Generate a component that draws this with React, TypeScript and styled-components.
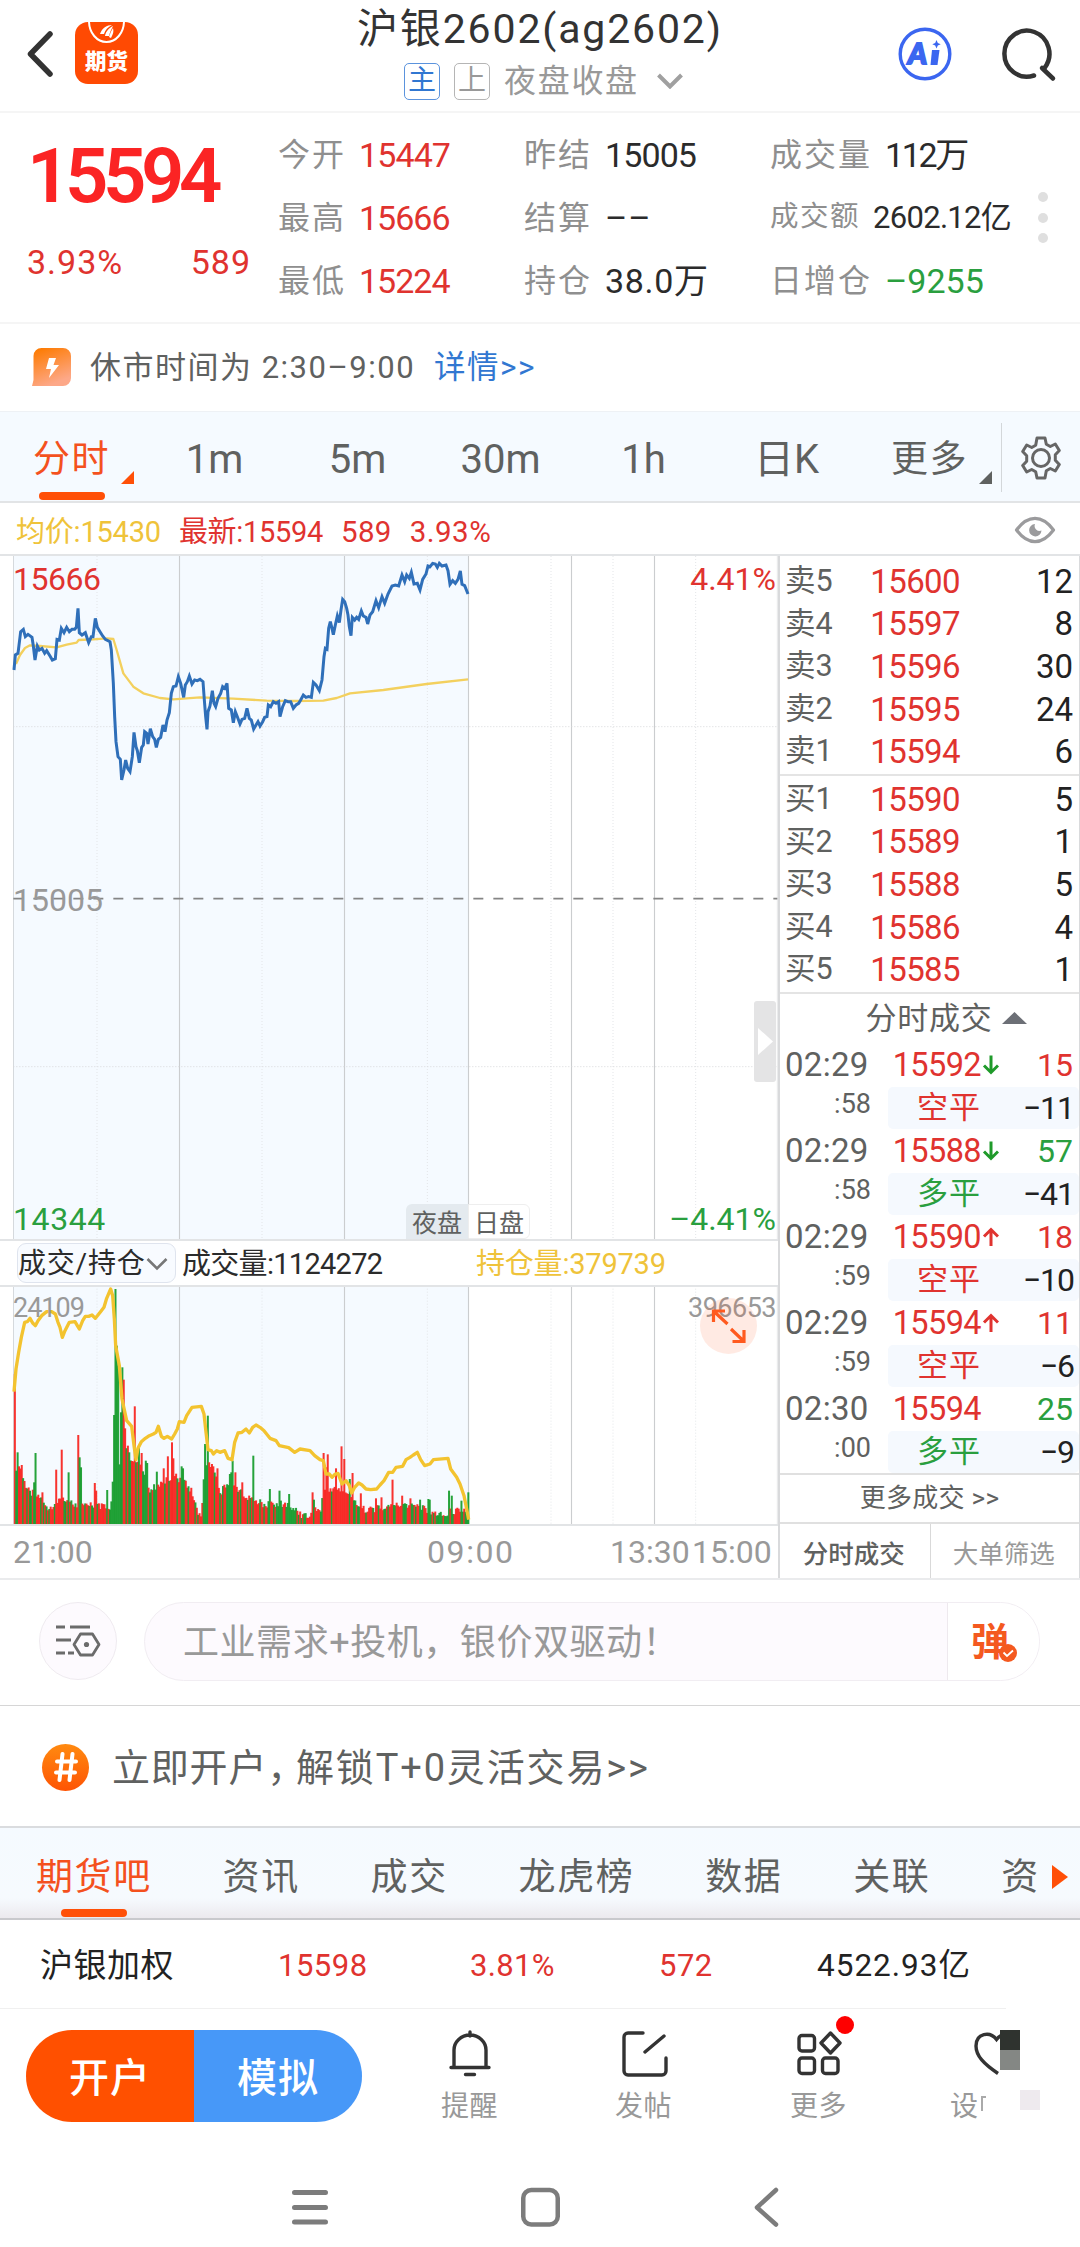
import React from "react";
import styled, { createGlobalStyle } from "styled-components";

const RED = "#e0332f";
const GREEN = "#2a9f3f";
const ORANGE = "#ff4f07";
const YELLOW = "#efc33a";
const INK = "#2b2b2b";
const MID = "#5f6160";
const MUTED = "#8f8f8f";
const LINE = "#e2e4e6";

const Global = createGlobalStyle`
  * { box-sizing: border-box; }
  body {
    margin: 0;
    background: #fff;
    font-family: Roboto, "Noto Sans CJK SC", sans-serif;
    line-height: 1;
    color: ${INK};
  }
`;

type TextProps = { $size?: number; $color?: string; $track?: number; $weight?: number };

const Text = styled.span<TextProps>`
  font-size: ${(p) => p.$size ?? 32}px;
  color: ${(p) => p.$color ?? "inherit"};
  letter-spacing: ${(p) => p.$track ?? 0}px;
  font-weight: ${(p) => p.$weight ?? 400};
  white-space: pre;
  line-height: 1;
`;

const Screen = styled.div`
  width: 1080px;
  height: 2247px;
  display: flex;
  flex-direction: column;
  overflow: hidden;
`;

/* ---------- header ---------- */
const Header = styled.header`
  height: 113px;
  flex: none;
  display: grid;
  grid-template-columns: 75px 64px 1fr 59px 126px;
  border-bottom: 2px solid #f5f5f5;
`;
const HeaderCell = styled.div<{ $top: number; $left?: number }>`
  padding-top: ${(p) => p.$top}px;
  padding-left: ${(p) => p.$left ?? 0}px;
  svg { display: block; }
`;
const AppLogo = styled.div`
  margin-top: 22px;
  width: 63px;
  height: 62px;
  border-radius: 13px;
  background: #ff4a03;
  display: flex;
  flex-direction: column;
  align-items: center;
  overflow: hidden;
  svg { display: block; flex: none; }
`;
const TitleBlock = styled.div`
  display: flex;
  flex-direction: column;
  padding-left: 218px;
`;
const TitleLine = styled.div`
  height: 56px;
  padding-top: 2px;
  display: flex;
  align-items: center;
`;
const SubLine = styled.div`
  height: 50px;
  margin-left: 47px;
  display: flex;
  align-items: center;
  svg { margin-left: 18px; }
`;
const Tag = styled.span<{ $color: string }>`
  width: 36px;
  height: 37px;
  margin-right: 14px;
  border: 1.5px solid ${(p) => p.$color};
  border-radius: 5px;
  display: flex;
  align-items: center;
  justify-content: center;
`;

/* ---------- quote ---------- */
const Quote = styled.section`
  height: 211px;
  flex: none;
  display: grid;
  grid-template-columns: 278px 246px 246px 261px 1fr;
  border-bottom: 2px solid #f5f5f5;
`;
const PriceBlock = styled.div`
  padding: 25px 0 0 27px;
`;
const BigPrice = styled.div`
  height: 76px;
  display: flex;
  align-items: center;
`;
const ChangeLine = styled.div`
  height: 40px;
  margin-top: 28px;
  width: 224px;
  display: flex;
  align-items: center;
  justify-content: space-between;
`;
const QuoteColumn = styled.div`
  padding-top: 10px;
`;
const QuoteItem = styled.div<{ $label: number }>`
  height: 63px;
  display: grid;
  grid-template-columns: ${(p) => p.$label}px auto;
  align-items: center;
  justify-content: start;
`;
const Dots = styled.div`
  display: flex;
  flex-direction: column;
  gap: 10.5px;
  padding: 79px 0 0 7px;
`;
const Dot = styled.i`
  width: 10px;
  height: 10px;
  border-radius: 50%;
  background: #dfdfdf;
`;

/* ---------- notice ---------- */
const Notice = styled.section`
  height: 87px;
  flex: none;
  display: flex;
  align-items: center;
  padding-left: 32px;
`;
const NoticeText = styled.div`
  margin-left: 19px;
  display: flex;
  align-items: center;
`;

/* ---------- period tabs ---------- */
const Periods = styled.nav`
  height: 92px;
  flex: none;
  background: #f5faff;
  border-top: 1px solid #eef1f5;
  border-bottom: 2px solid ${LINE};
  display: flex;
`;
const Period = styled.div`
  position: relative;
  width: 143px;
  display: flex;
  align-items: center;
  justify-content: center;
  padding-top: 6px;
`;
const Corner = styled.i<{ $color: string }>`
  position: absolute;
  right: 9px;
  bottom: 17px;
  border-left: 13px solid transparent;
  border-bottom: 13px solid ${(p) => p.$color};
`;
const Underline = styled.i<{ $bottom: number }>`
  position: absolute;
  left: 50%;
  bottom: ${(p) => p.$bottom}px;
  width: 66px;
  height: 8px;
  margin-left: -33px;
  border-radius: 4px;
  background: ${ORANGE};
`;
const GearCell = styled.div`
  width: 79px;
  margin: 11px 0 9px;
  border-left: 1px solid #d3d7da;
  display: flex;
  align-items: center;
  justify-content: center;
`;

/* ---------- average line ---------- */
const InfoRow = styled.section`
  height: 53px;
  flex: none;
  display: flex;
  align-items: center;
  padding: 8px 24px 0 16px;
  gap: 18px;
  border-bottom: 2px solid ${LINE};
  svg { margin: -6px 0 0 auto; }
`;

/* ---------- chart + book ---------- */
const Main = styled.main`
  height: 1024px;
  flex: none;
  display: grid;
  grid-template-columns: 778px 302px;
  border-bottom: 2px solid #eaebed;
`;
const ChartSide = styled.div`
  display: flex;
  flex-direction: column;
`;
const Plot = styled.div<{ $h: number }>`
  position: relative;
  height: ${(p) => p.$h}px;
  svg { display: block; }
`;
const PlotLabel = styled.div<{ $top: number; $left?: number; $right?: number }>`
  position: absolute;
  top: ${(p) => p.$top}px;
  ${(p) => (p.$left !== undefined ? `left: ${p.$left}px;` : "")}
  ${(p) => (p.$right !== undefined ? `right: ${p.$right}px;` : "")}
  display: flex;
`;
const Sessions = styled.div`
  position: absolute;
  left: 406px;
  bottom: 0;
  display: flex;
`;
const Session = styled.div<{ $active?: boolean }>`
  width: 62px;
  height: 35px;
  padding-top: 3px;
  display: flex;
  align-items: center;
  justify-content: center;
  background: ${(p) => (p.$active ? "#e4eaef" : "#fff")};
  border: ${(p) => (p.$active ? "none" : "1px solid #eee")};
  border-radius: ${(p) => (p.$active ? "6px 0 0 0" : "0 6px 6px 0")};
`;
const Handle = styled.div`
  position: absolute;
  right: 2px;
  top: 445px;
  width: 22px;
  height: 81px;
  border-radius: 3px;
  background: #e4e4e5;
  display: flex;
  align-items: center;
  justify-content: center;
`;
const Legend = styled.div`
  height: 48px;
  border-top: 2px solid ${LINE};
  border-bottom: 2px solid ${LINE};
  display: grid;
  grid-template-columns: 159px 300px 1fr;
  padding-left: 17px;
  align-items: center;
`;
const Selector = styled.div`
  height: 40px;
  padding-top: 2px;
  border: 1px solid #dfe4ee;
  border-radius: 9px;
  background: #f8fbff;
  display: flex;
  align-items: center;
`;
const LegendText = styled.div<{ $pad: number }>`
  padding: 2px 0 0 ${(p) => p.$pad}px;
  display: flex;
`;
const Axis = styled.div`
  height: 54px;
  border-top: 2px solid ${LINE};
  display: grid;
  grid-template-columns: 414px 183px 82px auto;
  padding-left: 13px;
  align-items: center;
`;
const ExpandButton = styled.div`
  position: absolute;
  right: 21px;
  top: 11px;
  width: 57px;
  height: 56px;
  border-radius: 50%;
  background: rgba(255, 90, 40, 0.13);
  display: flex;
  align-items: center;
  justify-content: center;
`;

const Book = styled.aside`
  border-left: 2px solid #d9dadc;
  border-right: 1px solid #d9dadc;
  display: flex;
  flex-direction: column;
`;
const Levels = styled.div<{ $pad: string }>`
  padding: ${(p) => p.$pad};
  border-bottom: 2px solid #e4e4e4;
`;
const Level = styled.div`
  height: 42.6px;
  display: grid;
  grid-template-columns: 54px 121px 1fr;
  align-items: center;
  padding: 0 6px 0 5px;
  & > :nth-child(n + 2) { text-align: right; }
`;
const TradesTitle = styled.div`
  height: 49px;
  display: flex;
  align-items: center;
  justify-content: center;
  padding-left: 33px;
  gap: 9px;
`;
const Trade = styled.div`
  height: 86px;
  display: grid;
  grid-template-columns: 108px 1fr;
  grid-template-rows: 44px 42px;
`;
const TradeTime = styled.div`
  padding-left: 5px;
  display: flex;
  align-items: center;
`;
const TradeSecond = styled.div`
  display: flex;
  align-items: center;
  justify-content: flex-end;
  padding: 0 17px 6px 0;
`;
const TradePrice = styled.div`
  display: grid;
  grid-template-columns: 93px 18px 1fr;
  align-items: center;
  padding-right: 6px;
  & > :first-child, & > :last-child { text-align: right; }
`;
const TradeKind = styled.div`
  background: #f5f9fe;
  border-radius: 5px;
  display: flex;
  align-items: center;
  justify-content: space-between;
  padding: 0 5px 0 29px;
`;
const MoreTrades = styled.div`
  flex: 1;
  border-top: 2px solid #e0e0e0;
  display: flex;
  align-items: center;
  justify-content: center;
`;
const BookTabs = styled.div`
  height: 56px;
  border-top: 2px solid #e0e0e0;
  display: grid;
  grid-template-columns: 1fr 1fr;
`;
const BookTab = styled.div`
  display: flex;
  align-items: center;
  justify-content: center;
  padding: 7px 2px 0 0;
  & + & { border-left: 1px solid #d9d9d9; }
`;

/* ---------- comment bar ---------- */
const CommentBar = styled.section`
  height: 126px;
  flex: none;
  border-bottom: 1px solid #d6d6d6;
  padding: 22px 40px 0 39px;
  display: flex;
  gap: 27px;
`;
const RoundButton = styled.div`
  width: 78px;
  height: 78px;
  border-radius: 50%;
  border: 1px solid #efebf0;
  background: #fdfafe;
  display: flex;
  align-items: center;
  justify-content: center;
`;
const CommentField = styled.div`
  flex: 1;
  height: 79px;
  border: 1px solid #f1edf2;
  border-radius: 40px;
  background: #fdfafe;
  display: flex;
  overflow: hidden;
`;
const Placeholder = styled.div`
  flex: 1;
  display: flex;
  align-items: center;
  padding: 2px 0 0 38px;
`;
const BarrageToggle = styled.div`
  position: relative;
  width: 92px;
  background: #fff;
  border-left: 1px solid #eee9ee;
  display: flex;
  align-items: center;
  padding-left: 23px;
  svg { position: absolute; left: 51px; top: 41px; }
`;

/* ---------- promo ---------- */
const Promo = styled.section`
  height: 122px;
  flex: none;
  border-bottom: 2px solid #dadcdf;
  display: flex;
  align-items: center;
  padding: 2px 0 0 42px;
`;
const PromoText = styled.div`
  padding: 2px 0 0 23px;
  display: flex;
  & > :first-child { margin-right: -10px; }
`;
const HashBadge = styled.div`
  width: 47px;
  height: 47px;
  border-radius: 50%;
  background: linear-gradient(#ff8a10, #fe5404);
  display: flex;
  align-items: center;
  justify-content: center;
`;

/* ---------- section tabs ---------- */
const Sections = styled.nav`
  position: relative;
  height: 92px;
  flex: none;
  display: flex;
  gap: 70.8px;
  padding: 8px 0 0 36px;
  background: linear-gradient(#f5faff 0, #f6fafe 78%, #ece9ee 100%);
  border-bottom: 2px solid #c9c9cd;
`;
const SectionTab = styled.div`
  position: relative;
  display: flex;
  align-items: center;
`;
const NextArrow = styled.i`
  position: absolute;
  left: 1052px;
  top: 37px;
  border-left: 16px solid ${ORANGE};
  border-top: 12px solid transparent;
  border-bottom: 12px solid transparent;
`;

/* ---------- weighted row ---------- */
const WeightedRow = styled.section`
  height: 89px;
  flex: none;
  width: 1006px;
  border-bottom: 1px solid #f0f0f0;
  display: grid;
  grid-template-columns: 238px 192px 189px 158px auto;
  align-items: center;
  padding: 3px 0 0 40px;
`;

/* ---------- actions ---------- */
const Actions = styled.footer`
  height: 135px;
  flex: none;
  display: grid;
  grid-template-columns: 336px 79px 57px 117px 57px 118px 57px 92px 100px;
  padding: 21px 0 0 26px;
  & > *:nth-child(2) { grid-column: 3; }
  & > *:nth-child(3) { grid-column: 5; }
  & > *:nth-child(4) { grid-column: 7; }
  & > *:nth-child(5) { grid-column: 9; }
`;
const Split = styled.div`
  height: 92px;
  display: grid;
  grid-template-columns: 168px 168px;
  border-radius: 46px;
  overflow: hidden;
`;
const SplitHalf = styled.div<{ $bg: string }>`
  background: ${(p) => p.$bg};
  display: flex;
  align-items: center;
  justify-content: center;
  padding-top: 6px;
`;
const Action = styled.div`
  position: relative;
  display: flex;
  flex-direction: column;
  align-items: center;
  svg { display: block; margin-bottom: 15px; flex: none; }
`;
const Badge = styled.i`
  position: absolute;
  left: 46px;
  top: -14px;
  width: 18px;
  height: 18px;
  border-radius: 50%;
  background: #fe0000;
`;
const FadedAction = styled.div`
  position: relative;
  padding-left: 19px;
`;
const HeartIcon = styled.svg`
  display: block;
  margin: 0 0 15px 16px;
`;
const FadedLabel = styled.div`
  margin-left: -8px;
  display: flex;
  gap: 2px;
`;
const Pixel = styled.i<{ $x: number; $y: number; $bg: string }>`
  position: absolute;
  left: ${(p) => p.$x}px;
  top: ${(p) => p.$y}px;
  width: 20px;
  height: 20px;
  background: ${(p) => p.$bg};
`;

const SystemNav = styled.div`
  height: 103px;
  flex: none;
  display: grid;
  grid-template-columns: 36px 39px 24px;
  column-gap: 193px;
  padding: 43px 0 0 292px;
  svg:last-child { margin-left: 1px; }
`;

/* ---------- chart data, in thirds of a pixel ---------- */
const PRICE =
  "42,390 46,345 54,340 62,275 70,268 76,290 84,283 96,292 100,318 105,360 112,318 118,330 126,325 134,340 140,332 150,348 157,360 166,356 171,298 178,300 184,265 192,278 200,262 208,275 216,268 224,268 229,262 234,205 238,278 246,285 256,278 266,308 274,290 279,290 286,235 292,262 300,275 308,288 316,298 330,305 334,330 340,430 344,530 348,605 354,650 361,658 365,720 372,690 377,660 383,685 390,695 397,650 402,577 408,620 412,632 418,668 425,622 430,615 434,575 440,580 444,612 451,566 458,590 464,598 469,622 475,598 482,592 489,555 495,575 501,540 508,518 514,460 520,440 528,438 535,410 542,430 551,472 556,435 562,425 568,408 576,432 584,420 592,422 600,418 609,425 613,480 617,530 621,568 624,515 630,498 637,452 642,490 647,500 654,475 662,460 668,440 674,445 681,430 686,505 694,510 700,548 706,515 712,530 720,552 726,538 734,535 741,505 748,535 754,540 761,567 768,555 774,545 780,558 788,545 794,532 801,530 805,495 812,500 820,485 828,490 836,485 840,530 848,500 856,482 864,485 872,485 880,505 888,495 896,490 902,480 910,465 918,472 926,470 934,472 940,427 948,435 958,452 966,420 972,350 976,325 981,328 986,265 991,245 996,265 1000,284 1006,255 1012,228 1018,248 1023,210 1028,178 1034,185 1040,205 1044,225 1048,260 1053,287 1057,232 1064,240 1070,232 1076,238 1084,213 1090,228 1098,232 1103,252 1110,225 1118,215 1128,182 1136,203 1146,170 1154,190 1164,162 1176,138 1186,135 1196,138 1206,105 1214,125 1220,105 1228,115 1234,97 1242,132 1252,130 1260,150 1268,118 1278,102 1284,78 1290,80 1298,70 1306,72 1312,82 1318,70 1326,78 1338,75 1344,92 1350,133 1358,122 1366,130 1374,118 1381,93 1386,133 1394,137 1404,162";
const AVERAGE =
  "48,372 60,345 75,324 90,316 120,318 170,322 200,314 230,308 236,300 280,298 320,295 340,297 350,330 370,400 400,440 430,460 480,474 520,478 600,472 700,476 800,482 880,483 970,482 1010,474 1050,460 1150,450 1280,432 1404,418";
const INTEREST =
  "42,638 48,570 56,520 64,475 74,430 82,428 90,418 98,432 106,440 114,425 125,410 140,398 155,398 166,405 174,430 180,445 187,475 195,455 208,430 225,428 232,440 238,450 248,425 256,412 266,412 276,408 286,418 294,408 304,395 312,385 320,358 332,330 338,350 343,420 347,500 358,560 366,660 380,725 395,742 402,800 408,842 414,808 424,788 436,778 448,770 460,765 468,760 475,742 484,772 492,778 502,772 515,780 524,765 532,750 538,728 552,730 560,710 576,685 604,682 612,705 618,760 624,812 634,815 640,825 650,815 660,820 674,815 684,838 696,842 704,790 714,762 726,760 738,750 748,762 758,745 768,738 780,745 792,755 810,778 828,785 838,800 866,806 884,820 900,810 930,815 944,830 960,842 970,845 978,885 988,885 996,895 1006,885 1014,883 1026,915 1038,905 1048,920 1055,942 1064,925 1076,912 1086,918 1098,930 1112,932 1130,930 1140,918 1152,905 1166,880 1178,880 1188,865 1208,862 1218,842 1230,835 1240,828 1252,820 1262,842 1274,860 1290,855 1300,842 1344,838 1352,870 1370,895 1380,915 1392,950 1400,990 1406,1022";

const BASE: [number, number][] = [
  [42, 860], [64, 870], [74, 915], [90, 940], [110, 940], [145, 985], [190, 950], [215, 972], [250, 980], [270, 975],
  [330, 985], [338, 930], [376, 800], [395, 840], [430, 870], [450, 930], [480, 910], [520, 885], [550, 905], [575, 935],
  [590, 990], [605, 1005], [612, 860], [640, 870], [660, 940], [690, 900], [740, 955], [800, 975], [850, 970], [880, 985],
  [900, 1003], [930, 1008], [945, 990], [962, 990], [968, 930], [1010, 925], [1040, 935], [1060, 965], [1080, 988],
  [1150, 985], [1180, 975], [1230, 975], [1280, 990], [1340, 1012], [1345, 995], [1400, 990], [1410, 990],
];
const SPIKES: [number, number, "r" | "g"][] = [
  [46, 585, "r"], [52, 820, "g"], [58, 862, "r"], [64, 858, "r"], [100, 910, "g"], [105, 822, "g"], [126, 940, "r"],
  [170, 872, "r"], [183, 812, "r"], [204, 880, "g"], [233, 768, "r"], [238, 835, "g"], [243, 865, "g"], [282, 912, "r"],
  [287, 935, "r"], [319, 933, "g"], [336, 908, "g"], [340, 708, "g"], [345, 330, "g"], [350, 500, "g"], [355, 560, "g"],
  [361, 700, "g"], [365, 565, "g"], [370, 602, "r"], [376, 748, "r"], [382, 800, "r"], [388, 820, "g"], [402, 682, "r"],
  [408, 850, "g"], [418, 800, "g"], [424, 822, "r"], [437, 845, "g"], [442, 852, "g"], [468, 878, "g"], [489, 868, "r"],
  [505, 832, "r"], [514, 790, "r"], [519, 838, "r"], [543, 862, "g"], [549, 868, "g"], [616, 795, "g"], [621, 710, "g"],
  [628, 850, "r"], [634, 855, "r"], [640, 862, "r"], [650, 868, "r"], [688, 885, "g"], [694, 880, "g"], [699, 845, "g"],
  [705, 880, "r"], [725, 910, "r"], [761, 830, "g"], [810, 930, "g"], [839, 935, "g"], [866, 945, "g"], [938, 940, "r"],
  [943, 962, "g"], [972, 822, "r"], [979, 865, "r"], [984, 826, "r"], [1009, 868, "r"], [1026, 802, "r"],
  [1031, 840, "r"], [1047, 900, "g"], [1059, 882, "r"], [1083, 943, "r"], [1128, 958, "r"], [1145, 955, "r"],
  [1178, 902, "r"], [1207, 950, "r"], [1231, 958, "r"], [1261, 962, "g"], [1285, 960, "g"], [1290, 962, "g"],
  [1348, 935, "g"], [1353, 950, "g"], [1385, 965, "g"], [1405, 940, "g"],
];

function baseAt(x: number) {
  for (let i = 1; i < BASE.length; i++) {
    const [x0, y0] = BASE[i - 1];
    const [x1, y1] = BASE[i];
    if (x <= x1) return y0 + ((y1 - y0) * (x - x0)) / (x1 - x0);
  }
  return 990;
}

const BARS = Array.from({ length: 330 }, (_, i) => {
  const x = 44 + i * 4.135;
  const noise = Math.abs(Math.sin(i * 12.9898) * 43758.5453) % 1;
  const spike = SPIKES.find((s) => Math.abs(s[0] - x) <= 2.07);
  const top = spike ? spike[1] : baseAt(x) + noise * 22 - 8;
  const green = spike ? spike[2] === "g" : Math.abs(Math.sin(i * 4.1414) * 9631.77) % 1 > 0.6;
  return { x, top, green };
});

const SOLID = [538.5, 1033.5, 1405.5, 1714.5, 1963.5];
const DOTTED = [291, 786, 1282, 1653, 1839, 2087];

const Gridlines = ({ top, bottom }: { top: number; bottom: number }) => (
  <>
    <rect x="40" y={top} width="1366" height={bottom - top} fill="#f5faff" />
    <line x1="40.5" x2="40.5" y1={top} y2={bottom} stroke="#d5d9dd" strokeWidth="3" />
    {SOLID.map((x) => (
      <line key={x} x1={x} x2={x} y1={top} y2={bottom} stroke="#cbcdcf" strokeWidth="3.4" />
    ))}
    {DOTTED.map((x) => (
      <line key={x} x1={x} x2={x} y1={top} y2={bottom} stroke="#e3e5e8" strokeWidth="3" strokeDasharray="3 6" />
    ))}
    <line x1="2332" x2="2332" y1={top} y2={bottom} stroke="#e6e7e8" strokeWidth="3" />
  </>
);

const PriceChart = () => (
  <svg width="778" height="683" viewBox="0 48 2334 2049">
    <Gridlines top={48} bottom={2097} />
    {[560, 1580].map((y) => (
      <line key={y} x1="40" x2="2332" y1={y} y2={y} stroke="#d6d8da" strokeWidth="3" strokeDasharray="3 6" />
    ))}
    <line x1="40" x2="2332" y1="1076" y2="1076" stroke="#858585" strokeWidth="5" strokeDasharray="30 30" />
    <polyline points={AVERAGE} fill="none" stroke="#f3d05e" strokeWidth="7" strokeLinejoin="round" />
    <polyline points={PRICE} fill="none" stroke="#2f6fb9" strokeWidth="9" strokeLinejoin="miter" />
  </svg>
);

const VolumeChart = () => (
  <svg width="778" height="237" viewBox="0 324 2334 711" preserveAspectRatio="none">
    <Gridlines top={320} bottom={1036} />
    {BARS.map((b) => (
      <rect
        key={b.x}
        x={b.x - 2.4}
        y={b.top}
        width="6"
        height={1036 - b.top}
        fill={b.green ? "#169c2c" : "#f7231f"}
        fillOpacity="0.93"
      />
    ))}
    <polyline points={INTEREST} fill="none" stroke="#f3c32f" strokeWidth="10" strokeLinejoin="round" />
  </svg>
);

/* ---------- content ---------- */
type QuoteEntry = { label: string; value: string; color?: string; small?: boolean; width: number; track?: number };
const QUOTES: QuoteEntry[][] = [
  [
    { label: "今开", value: "15447", color: RED, width: 81, track: -0.9 },
    { label: "最高", value: "15666", color: RED, width: 81, track: -1 },
    { label: "最低", value: "15224", color: RED, width: 81, track: -1 },
  ],
  [
    { label: "昨结", value: "15005", width: 81, track: -0.9 },
    { label: "结算", value: "--", width: 81, track: 1 },
    { label: "持仓", value: "38.0万", width: 81, track: 0.7 },
  ],
  [
    { label: "成交量", value: "112万", width: 115, track: -2.4 },
    { label: "成交额", value: "2602.12亿", small: true, width: 103, track: -0.7 },
    { label: "日增仓", value: "-9255", color: GREEN, width: 115 },
  ],
];

const ASKS = [["卖5", "15600", "12"], ["卖4", "15597", "8"], ["卖3", "15596", "30"], ["卖2", "15595", "24"], ["卖1", "15594", "6"]];
const BIDS = [["买1", "15590", "5"], ["买2", "15589", "1"], ["买3", "15588", "5"], ["买4", "15586", "4"], ["买5", "15585", "1"]];

const TRADES = [
  { time: "02:29", sec: ":58", price: "15592", dir: "down", qty: "15", kind: "空平", delta: "−11", up: true },
  { time: "02:29", sec: ":58", price: "15588", dir: "down", qty: "57", kind: "多平", delta: "−41", up: false },
  { time: "02:29", sec: ":59", price: "15590", dir: "up", qty: "18", kind: "空平", delta: "−10", up: true },
  { time: "02:29", sec: ":59", price: "15594", dir: "up", qty: "11", kind: "空平", delta: "−6", up: true },
  { time: "02:30", sec: ":00", price: "15594", dir: "", qty: "25", kind: "多平", delta: "−9", up: false },
];

const LevelRows = ({ rows }: { rows: string[][] }) => (
  <>
    {rows.map(([label, price, qty]) => (
      <Level key={label}>
        <Text $size={30.500} $color={MID}>{label}</Text>
        <Text $size={33} $color={RED} $track={-0.600}>{price}</Text>
        <Text $size={33} $color="#222">{qty}</Text>
      </Level>
    ))}
  </>
);

const DirArrow = ({ dir }: { dir: string }) => (
  <svg width="18" height="20" viewBox="0 0 18 20" fill="none" strokeWidth="3" stroke={dir === "up" ? RED : "#1f9a2a"}>
    {dir === "down" && <path d="M10 0.500v17M3 10.500l7 7 7-7" />}
    {dir === "up" && <path d="M10 19V2.500M3 9.500l7-7 7 7" />}
  </svg>
);

export default function App() {
  return (
    <Screen>
      <Global />
      <Header>
        <HeaderCell $top={30} $left={26}>
          <svg width="30" height="48" viewBox="0 0 30 48" fill="none" stroke="#333" strokeWidth="5.5" strokeLinecap="round" strokeLinejoin="round">
            <path d="M24 4L4.500 24L24 44" />
          </svg>
        </HeaderCell>
        <AppLogo>
          <svg width="63" height="29" viewBox="0 0 63 29" fill="none">
            <path d="M14 -1c0 12 8 21 17.500 21S49 11 49 -1" stroke="#fff" strokeWidth="2" />
            <path d="M25 12c2-6 7-9 12-9-4 2-7 5-8 9M30 14c1-5 4-8 8-10-2 4-3 6-4 10M34 15c1-3 2-6 4-9 1 4 0 6-2 10" fill="#fff" />
          </svg>
          <Text $size={21.500} $weight={900} $color="#fff">期货</Text>
        </AppLogo>
        <TitleBlock>
          <TitleLine>
            <Text $size={41} $color="#333" $track={1.850}>沪银2602(ag2602)</Text>
          </TitleLine>
          <SubLine>
            <Tag $color="#5b93dd"><Text $size={28} $color="#3177d1">主</Text></Tag>
            <Tag $color="#b5b5b5"><Text $size={28} $color="#999">上</Text></Tag>
            <Text $size={32} $color="#999" $track={1.700}>夜盘收盘</Text>
            <svg width="26" height="16" viewBox="0 0 26 16" fill="none" stroke="#a0a0a0" strokeWidth="4">
              <path d="M1.500 2L13 13.500L24.500 2" />
            </svg>
          </SubLine>
        </TitleBlock>
        <HeaderCell $top={27} $left={3}>
          <svg width="54" height="54" viewBox="0 0 54 54">
            <circle cx="27" cy="27" r="24.800" fill="none" stroke="#3b66f0" strokeWidth="3.400" />
            <text x="10" y="37" fontFamily="Lato, sans-serif" fontSize="29" fontWeight="900" fontStyle="italic" fill="#3b66f0" stroke="#3b66f0" strokeWidth="1.800">A</text>
            <path d="M34 23h7.500l-2 15H32.500z" fill="#3b66f0" />
            <path d="M38.500 13l1.300 2.900 2.900 1.300-2.900 1.300-1.300 2.900-1.300-2.900-2.900-1.300 2.900-1.300z" fill="#3b66f0" />
          </svg>
        </HeaderCell>
        <HeaderCell $top={27} $left={48}>
          <svg width="56" height="56" viewBox="0 0 56 56" fill="none" stroke="#333" strokeWidth="4.500" strokeLinecap="round">
            <path d="M32 48.500A22.500 23 0 1 1 42.500 41" />
            <path d="M40 41L51 51.500" />
          </svg>
        </HeaderCell>
      </Header>

      <Quote>
        <PriceBlock>
          <BigPrice><Text $size={76} $weight={600} $color="#fb2424" $track={-5.400}>15594</Text></BigPrice>
          <ChangeLine>
            <Text $size={34} $color={RED} $track={1}>3.93%</Text>
            <Text $size={34} $color={RED} $track={1}>589</Text>
          </ChangeLine>
        </PriceBlock>
        {QUOTES.map((col, i) => (
          <QuoteColumn key={i}>
            {col.map((q) => (
              <QuoteItem key={q.label} $label={q.width}>
                <Text $size={q.small ? 28.500 : 32} $color={MUTED} $track={q.small ? 1.500 : 2}>{q.label}</Text>
                <Text $size={q.small ? 31 : 34} $color={q.color ?? INK} $track={q.track}>
                  {q.value.replace(/-/g, "–")}
                </Text>
              </QuoteItem>
            ))}
          </QuoteColumn>
        ))}
        <Dots><Dot /><Dot /><Dot /></Dots>
      </Quote>

      <Notice>
        <svg width="39" height="39" viewBox="0 0 39 39">
          <defs>
            <linearGradient id="bolt" x1="0" y1="0" x2="0.400" y2="1">
              <stop offset="0.100" stopColor="#fd7c05" />
              <stop offset="1" stopColor="#fda888" />
            </linearGradient>
          </defs>
          <path d="M9 0h22a8 8 0 0 1 8 8v22a8 8 0 0 1-8 8H0l1.500-6V8a8 8 0 0 1 8-8z" fill="url(#bolt)" />
          <path d="M17 10h7l-2.500 7h5.500L17 30l2-9h-5z" fill="#fff" />
        </svg>
        <NoticeText>
          <Text $size={31} $color={MID} $track={1.500}>休市时间为 2:30–9:00</Text>
        </NoticeText>
        <NoticeText>
          <Text $size={31.500} $color="#3177d1" $track={1.500}>详情&gt;&gt;</Text>
        </NoticeText>
      </Notice>

      <Periods>
        {["分时", "1m", "5m", "30m", "1h", "日K", "更多"].map((p, i) => (
          <Period key={p}>
            <Text $size={i === 0 || i === 6 ? 37 : 40} $color={i === 0 ? "#f4511e" : MID} $track={i === 0 || i === 6 ? 1.500 : 0}>{p}</Text>
            {i === 0 && <Underline $bottom={1} />}
            {(i === 0 || i === 6) && <Corner $color={i === 0 ? ORANGE : MID} />}
          </Period>
        ))}
        <GearCell>
          <svg width="40" height="44" viewBox="0 0 40 44" fill="none" stroke="#666" strokeWidth="3" strokeLinejoin="round">
            <path d="M16 2h8l1.300 6.200 4 2.300 5-2.500 4 6.500-4 4.300v5.400l4 4.300-4 6.500-5-2.500-4 2.300L24 42h-8l-1.300-6.200-4-2.300-5 2.500-4-6.500 4-4.300v-5.400l-4-4.300 4-6.500 5 2.500 4-2.300z" />
            <circle cx="20" cy="22" r="8.500" />
          </svg>
        </GearCell>
      </Periods>

      <InfoRow>
        <Text $size={29} $color={YELLOW} $track={-0.200}>均价:15430</Text>
        <Text $size={29} $color={RED} $track={-0.300}>最新:15594</Text>
        <Text $size={29.500} $color={RED} $track={0.300}>589</Text>
        <Text $size={29.500} $color={RED} $track={0.500}>3.93%</Text>
        <svg width="42" height="28" viewBox="0 0 42 28">
          <path d="M2.500 14C14-1.500 28-1.500 39.500 14C28 29.500 14 29.500 2.500 14z" fill="none" stroke="#9b9b9d" strokeWidth="3.200" strokeLinejoin="round" />
          <path d="M21 8a6.200 6.200 0 1 0 6.500 6.500a5 5 0 0 1-6.500-6.500z" fill="#9b9b9d" />
        </svg>
      </InfoRow>

      <Main>
        <ChartSide>
          <Plot $h={683}>
            <PriceChart />
            <PlotLabel $top={7} $left={13}><Text $size={32} $color={RED} $track={-0.500}>15666</Text></PlotLabel>
            <PlotLabel $top={7} $right={2}><Text $size={32} $color={RED}>4.41%</Text></PlotLabel>
            <PlotLabel $top={328} $left={13}><Text $size={32} $color="#999">15005</Text></PlotLabel>
            <PlotLabel $top={647} $left={13}><Text $size={32} $color={GREEN} $track={0.600}>14344</Text></PlotLabel>
            <PlotLabel $top={647} $right={2}><Text $size={32} $color={GREEN}>–4.41%</Text></PlotLabel>
            <Sessions>
              <Session $active><Text $size={25} $color={MID}>夜盘</Text></Session>
              <Session><Text $size={25} $color={MID}>日盘</Text></Session>
            </Sessions>
            <Handle>
              <svg width="16" height="27" viewBox="0 0 16 27"><path d="M1 0l15 13.500L1 27z" fill="#fff" /></svg>
            </Handle>
          </Plot>
          <Legend>
            <Selector>
              <Text $size={28} $color={INK} $track={0.800}>成交/持仓</Text>
              <svg width="22" height="14" viewBox="0 0 22 14" fill="none" stroke="#777" strokeWidth="2.600">
                <path d="M1.500 2L11 11.500L20.500 2" />
              </svg>
            </Selector>
            <LegendText $pad={6}><Text $size={29} $color={INK} $track={-0.700}>成交量:1124272</Text></LegendText>
            <LegendText $pad={0}><Text $size={29} $color={YELLOW} $track={-0.200}>持仓量:379739</Text></LegendText>
          </Legend>
          <Plot $h={237}>
            <VolumeChart />
            <PlotLabel $top={8} $left={13}><Text $size={27} $color="#999" $track={-1}>24109</Text></PlotLabel>
            <PlotLabel $top={8} $right={2}><Text $size={27} $color="#999" $track={-0.500}>396653</Text></PlotLabel>
            <ExpandButton>
              <svg width="36" height="36" viewBox="0 0 36 36" fill="none" stroke="#ff5a1f" strokeWidth="3.200">
                <path d="M2.500 14V3H14M3 3.500L16.500 16M20 21l12.500 12M21.500 33.500H33V22" />
              </svg>
            </ExpandButton>
          </Plot>
          <Axis>
            <Text $size={32} $color="#999">21:00</Text>
            <Text $size={32} $color="#999" $track={1.600}>09:00</Text>
            <Text $size={32} $color="#999">13:30</Text>
            <Text $size={32} $color="#999">15:00</Text>
          </Axis>
        </ChartSide>

        <Book>
          <Levels $pad="4px 0 1px"><LevelRows rows={ASKS} /></Levels>
          <Levels $pad="2px 0 1px"><LevelRows rows={BIDS} /></Levels>
          <TradesTitle>
            <Text $size={31} $color={MID} $track={0.800}>分时成交</Text>
            <svg width="25" height="12" viewBox="0 0 25 12"><path d="M12.500 0L25 12H0z" fill="#6c6f76" /></svg>
          </TradesTitle>
          {TRADES.map((t, i) => {
            const color = t.up ? RED : GREEN;
            return (
              <Trade key={i}>
                <TradeTime><Text $size={33} $color={MID} $track={0.300}>{t.time}</Text></TradeTime>
                <TradePrice>
                  <Text $size={32.500} $color={RED} $track={-0.600}>{t.price}</Text>
                  <DirArrow dir={t.dir} />
                  <Text $size={32} $color={color}>{t.qty}</Text>
                </TradePrice>
                <TradeSecond><Text $size={27} $color={MID}>{t.sec}</Text></TradeSecond>
                <TradeKind>
                  <Text $size={31} $color={color} $track={1}>{t.kind}</Text>
                  <Text $size={32} $color="#222" $track={-1}>{t.delta}</Text>
                </TradeKind>
              </Trade>
            );
          })}
          <MoreTrades><Text $size={26} $color={MID} $track={0.300}>更多成交 &gt;&gt;</Text></MoreTrades>
          <BookTabs>
            <BookTab><Text $size={25.500} $weight={500} $color={MID}>分时成交</Text></BookTab>
            <BookTab><Text $size={25.500} $color="#999">大单筛选</Text></BookTab>
          </BookTabs>
        </Book>
      </Main>

      <CommentBar>
        <RoundButton>
          <svg width="46" height="36" viewBox="0 0 46 36" fill="none" stroke="#6b6b6b" strokeWidth="2.800">
            <path d="M1 4h9M15 4h20M1 17h15M1 30h9M13 30h6" />
            <path d="M25.500 11h12L44 21.500 37.500 32h-12L19 21.500z" strokeLinejoin="round" />
            <circle cx="31.500" cy="21.500" r="2.600" fill="#6b6b6b" stroke="none" />
          </svg>
        </RoundButton>
        <CommentField>
          <Placeholder><Text $size={36} $color="#999" $track={0.550}>工业需求+投机，银价双驱动！</Text></Placeholder>
          <BarrageToggle>
            <Text $size={38} $weight={600} $color="#f4591f">弹</Text>
            <svg width="18" height="18" viewBox="0 0 18 18">
              <circle cx="9" cy="9" r="9" fill="#f4591f" />
              <path d="M4.500 8.500l3.500 3.500 6-5.500" fill="none" stroke="#fff" strokeWidth="1.800" />
            </svg>
          </BarrageToggle>
        </CommentField>
      </CommentBar>

      <Promo>
        <HashBadge>
          <svg width="24" height="30" viewBox="0 0 24 30" fill="none" stroke="#fff" strokeWidth="4" strokeLinecap="round">
            <path d="M8.500 2L5.500 28M18.500 2L15.500 28M3 9.500h19M2 20.500h19" />
          </svg>
        </HashBadge>
        <PromoText>
          <Text $size={38} $color={MID} $track={0.800}>立即开户，</Text>
          <Text $size={38} $color={MID} $track={1.850}>解锁T+0灵活交易&gt;&gt;</Text>
        </PromoText>
      </Promo>

      <Sections>
        {["期货吧", "资讯", "成交", "龙虎榜", "数据", "关联", "资"].map((s, i) => (
          <SectionTab key={s}>
            <Text $size={37} $color={i === 0 ? "#f4511e" : MID} $track={1.600}>{s}</Text>
            {i === 0 && <Underline $bottom={1} />}
          </SectionTab>
        ))}
        <NextArrow />
      </Sections>

      <WeightedRow>
        <Text $size={33} $color="#222" $track={0.500}>沪银加权</Text>
        <Text $size={31} $color={RED} $track={0.500}>15598</Text>
        <Text $size={31} $color={RED} $track={0.300}>3.81%</Text>
        <Text $size={31} $color={RED} $track={0.500}>572</Text>
        <Text $size={31.500} $color="#222" $track={1}>4522.93亿</Text>
      </WeightedRow>

      <Actions>
        <Split>
          <SplitHalf $bg="#ff5000"><Text $size={40} $color="#fff" $track={1} $weight={500}>开户</Text></SplitHalf>
          <SplitHalf $bg="#4798f8"><Text $size={40} $color="#fff" $track={1} $weight={500}>模拟</Text></SplitHalf>
        </Split>
        <Action>
          <svg width="44" height="48" viewBox="0 0 44 48" fill="none" stroke="#333" strokeWidth="3.400" strokeLinecap="round">
            <path d="M22 2v4M6 37V20a16 15 0 0 1 32 0v17M3 37.500h38M17.500 44.500h9" />
          </svg>
          <Text $size={28} $color="#999" $track={0.500}>提醒</Text>
        </Action>
        <Action>
          <svg width="48" height="48" viewBox="0 0 48 48" fill="none" stroke="#333" strokeWidth="3.400" strokeLinecap="round">
            <path d="M23 3H8a4 4 0 0 0-4 4v34a4 4 0 0 0 4 4h34a4 4 0 0 0 4-4V28M25 22L44 6" />
          </svg>
          <Text $size={28} $color="#999" $track={0.500}>发帖</Text>
        </Action>
        <Action>
          <svg width="46" height="48" viewBox="0 0 46 48" fill="none" stroke="#333" strokeWidth="3.400" strokeLinejoin="round">
            <rect x="3" y="5.500" width="15.500" height="15.500" rx="3" />
            <rect x="3" y="28" width="15.500" height="15.500" rx="3" />
            <rect x="26.500" y="28" width="15.500" height="15.500" rx="3" />
            <path d="M34.500 3L44 13l-9.500 10L25 13z" />
          </svg>
          <Badge />
          <Text $size={28} $color="#999" $track={0.500}>更多</Text>
        </Action>
        <FadedAction>
          <HeartIcon width="32" height="48" viewBox="0 0 32 48" fill="none" stroke="#333" strokeWidth="3.400">
            <path d="M24 43.500C10 34 2 26 2 16C2 3 16 1 22.500 9.500C25 6 28 4.500 32 4.500" />
          </HeartIcon>
          <FadedLabel>
            <Text $size={28} $color="#999">设</Text>
            <svg width="6" height="20" viewBox="0 0 6 20" fill="none" stroke="#aaa" strokeWidth="2">
              <path d="M2 18V4h4" />
            </svg>
          </FadedLabel>
          <Pixel $x={61} $y={0} $bg="#2f332f" />
          <Pixel $x={61} $y={20} $bg="#848784" />
          <Pixel $x={81} $y={60} $bg="#eeeaee" />
        </FadedAction>
      </Actions>

      <SystemNav>
        <svg width="36" height="40" viewBox="0 0 36 40" stroke="#7c7c7c" strokeWidth="5" strokeLinecap="round">
          <path d="M2.500 5.500h31M2.500 20.500h31M2.500 35h31" />
        </svg>
        <svg width="39" height="40" viewBox="0 0 39 40" fill="none" stroke="#7c7c7c" strokeWidth="4.500">
          <rect x="2.250" y="3" width="34.500" height="34.500" rx="8" />
        </svg>
        <svg width="26" height="40" viewBox="0 0 26 40" fill="none" stroke="#7c7c7c" strokeWidth="4.500" strokeLinecap="round" strokeLinejoin="round">
          <path d="M22 3L3 20.500L22 37.500" />
        </svg>
      </SystemNav>
    </Screen>
  );
}
